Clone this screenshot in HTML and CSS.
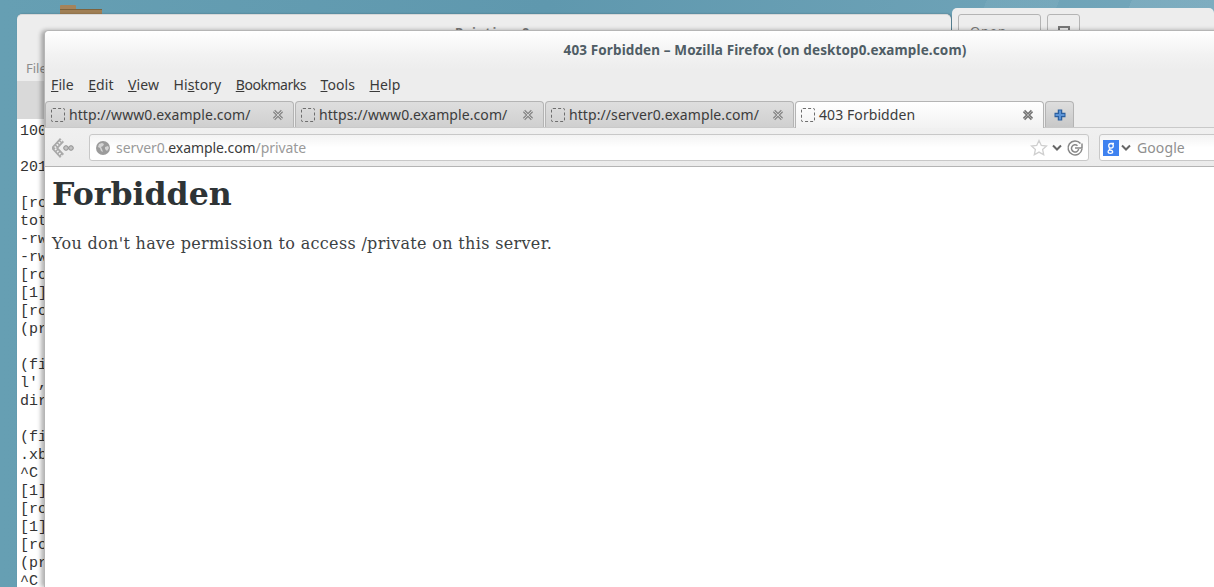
FILE: index.html
```html
<!DOCTYPE html>
<html lang="en">
<head>
<meta charset="utf-8">
<title>403 Forbidden</title>
<link rel="stylesheet" href="styles.css">
</head>
<body>
<main class="desktop">
  <div class="folder"><div class="folder-tab"></div><div class="folder-body"></div></div>

  <section class="window term">
    <div class="term-title">Pristine 0</div>
    <div class="term-menu">File</div>
    <div class="term-tabs"></div>
<pre class="term-text">100

201

[ro
tot
-rw
-rw
[ro
[1]
[ro
(pr

(fi
l',
dir

(fi
.xb
^C
[1]
[ro
[1]
[ro
(pr
^C</pre>
  </section>

  <section class="window editor">
    <div class="ed-btn ed-open">Open <span class="ed-caret"></span></div>
    <div class="ed-btn ed-save"><span class="ed-glyph"></span></div>
  </section>

  <section class="window firefox">
    <header class="ff-title">403 Forbidden – Mozilla Firefox (on desktop0.example.com)</header>
    <nav class="ff-menu">
      <span><u>F</u>ile</span><span><u>E</u>dit</span><span><u>V</u>iew</span><span>Hi<u>s</u>tory</span><span class="menu-tight"><u>B</u>ookmarks</span><span><u>T</u>ools</span><span><u>H</u>elp</span>
    </nav>
    <div class="ff-tabs">
      <div class="tab"><span class="fav"></span><span class="tab-label">http://www0.example.com/</span><svg class="tab-x" viewBox="0 0 12 12"><path class="x-o" d="M2 2l8 8M10 2l-8 8"/><path class="x-i" d="M2 2l8 8M10 2l-8 8"/></svg></div>
      <div class="tab"><span class="fav"></span><span class="tab-label">https://www0.example.com/</span><svg class="tab-x" viewBox="0 0 12 12"><path class="x-o" d="M2 2l8 8M10 2l-8 8"/><path class="x-i" d="M2 2l8 8M10 2l-8 8"/></svg></div>
      <div class="tab"><span class="fav"></span><span class="tab-label">http://server0.example.com/</span><svg class="tab-x" viewBox="0 0 12 12"><path class="x-o" d="M2 2l8 8M10 2l-8 8"/><path class="x-i" d="M2 2l8 8M10 2l-8 8"/></svg></div>
      <div class="tab tab-active"><span class="fav"></span><span class="tab-label">403 Forbidden</span><svg class="tab-x" viewBox="0 0 12 12"><path class="x-o" d="M2 2l8 8M10 2l-8 8"/><path class="x-i" d="M2 2l8 8M10 2l-8 8"/></svg></div>
      <div class="tab-new"><svg viewBox="0 0 14 14" width="14" height="14"><path class="plus-o" d="M7 1.500v11M1.500 7h11"/><path class="plus-i" d="M7 2.500v9M2.500 7h9"/></svg></div>
    </div>
    <div class="ff-nav">
      <svg class="back" viewBox="0 0 22 20" width="22" height="20">
        <path class="back-o" d="M10 2L2.500 10 10 18"/><path class="back-i" d="M10 2L2.500 10 10 18"/>
        <circle cx="14" cy="10" r="2.300"/><circle cx="19" cy="10" r="2.300"/>
      </svg>
      <div class="urlbar">
        <svg class="globe" viewBox="0 0 14 14" width="14" height="14"><circle cx="7" cy="7" r="7" fill="#9b9b9b"/><path d="M3 3l3-1 2 1-1 2-2 1 1 2 1 3-2-1-1-3-2-1zM9 6l3-1 1 2-2 3-2-2z" fill="#d4d4d4"/></svg>
        <span class="url"><span class="dim">server0.</span>example.com<span class="dim">/private</span></span>
        <span class="url-icons">
          <svg viewBox="0 0 18 18" width="18" height="18"><path class="star" d="M9 1.500l2.300 5 5.200.5-3.900 3.500 1.100 5.300L9 13.100l-4.700 2.700 1.100-5.300L1.500 7l5.200-.5z"/></svg>
          <svg viewBox="0 0 10 8" width="10" height="8"><path class="chev" d="M1 1.500l4 4 4-4"/></svg>
          <svg viewBox="0 0 18 18" width="18" height="18"><path class="reload" d="M14.500 4.500A7 7 0 1 0 16 10M11.500 6.800A3.600 3.600 0 1 0 12.600 10M9 9h7V4.500"/></svg>
        </span>
      </div>
      <div class="search">
        <svg class="gbox" viewBox="0 0 16 16" width="16" height="16"><rect width="16" height="16" fill="#3f82f0"/><path d="M11 3.500H8a2.300 2.300 0 1 0 0 4.600 2.300 2.300 0 0 0 0-4.600M6.800 8.200c-1.200.8-.6 1.500.6 1.800 1.500.4 2.300.8 2.300 1.700 0 1-1 1.600-2.300 1.600s-2.300-.6-2.300-1.600c0-.8.700-1.300 1.500-1.500" fill="none" stroke="#fff" stroke-width="1.300"/></svg>
        <svg viewBox="0 0 10 8" width="10" height="8"><path class="chev" d="M1 1.500l4 4 4-4"/></svg>
        <span class="search-label">Google</span>
      </div>
    </div>
    <article class="ff-page">
      <h1>Forbidden</h1>
      <p>You don't have permission to access /private on this server.</p>
    </article>
  </section>
</main>
</body>
</html>
```
FILE: styles.css
```css
* { box-sizing: border-box; }
html, body { margin: 0; height: 100%; overflow: hidden; }
body { font-family: "Noto Sans", sans-serif; }

.desktop {
  position: relative;
  width: 1214px;
  height: 587px;
  overflow: hidden;
  background:
    linear-gradient(112deg, transparent 78%, rgba(255,255,255,.07) 78%, rgba(255,255,255,.07) 84%, transparent 84%),
    linear-gradient(112deg, transparent 68%, rgba(255,255,255,.05) 68%, rgba(255,255,255,.05) 73%, transparent 73%),
    linear-gradient(90deg, #669fb3 0, #5f98ae 45%, #74a7bb 100%);
}

.folder { position: absolute; left: 60px; top: 5px; width: 42px; height: 10px; }
.folder-tab { width: 16px; height: 4px; background: #a5835a; border-radius: 1px 1px 0 0; }
.folder-body { height: 6px; background: #a07f55; border-top: 1px solid #7d623c; }

.window { position: absolute; border-radius: 5px 5px 0 0; overflow: hidden; }

.term {
  left: 17px; top: 14px; width: 934px; height: 573px;
  background: #ededed;
  border-top: 1px solid #d8d8d8;
  box-shadow: 1px 0 2px rgba(0,0,0,.3);
  display: flex;
  flex-direction: column;
}
.term-title { flex: none; height: 30px; padding: 8px 0 0 18px; text-align: center; font-size: 13px; font-weight: 700; letter-spacing: 1.500px; color: #777; }
.term-menu { flex: none; height: 36px; padding: 14px 0 0 9px; font-size: 13px; line-height: 18px; color: #8c8c8c; }
.term-tabs { flex: none; height: 38px; background: #d9d9d9; }
.term-text {
  flex: 1;
  min-height: 0;
  overflow: hidden;
  margin: 0;
  padding: 4px 0 0 3px;
  background: #fff;
  font: 15px/18px "Liberation Mono", monospace;
  color: #333;
}

.editor {
  left: 952px; top: 8px; width: 262px; height: 30px;
  background: #ededed;
  padding: 6px 0 0 6px;
  display: flex;
  gap: 6px;
  align-items: flex-start;
}
.ed-btn {
  height: 30px;
  border: 1px solid #b4b4b4;
  border-radius: 3px;
  background: #ededed;
  text-align: center;
  font-size: 13px;
  color: #777;
  padding-top: 7px;
  letter-spacing: .8px;
}
.ed-open { width: 83px; }
.ed-save { width: 33px; padding-top: 5px; }
.ed-caret { display: inline-block; width: 10px; height: 2px; margin-left: 8px; background: #888; vertical-align: middle; }
.ed-glyph { display: inline-block; width: 12px; height: 14px; border: 2px solid #777; margin-top: 6px; }

.firefox {
  left: 44px; top: 30px; width: 1441px; height: 557px;
  border-top: 1px solid #b5b5b5;
  border-left: 1px solid #b5b5b5;
  box-shadow: -3px 0 4px rgba(0,0,0,.3);
  display: flex;
  flex-direction: column;
  background: #ededed;
}
.ff-title {
  height: 39px;
  padding-top: 10px;
  background: linear-gradient(#fff 0, #f2f2f2 60%, #ededed 100%);
  text-align: center;
  font-size: 13.500px;
  line-height: 18px;
  font-weight: 700;
  letter-spacing: .12px;
  color: #4f5d65;
}
.ff-menu {
  height: 31px;
  display: flex;
  gap: 14.400px;
  padding: 4px 0 0 6px;
  font-size: 14px;
  line-height: 22px;
  color: #3a3a3a;
  letter-spacing: .1px;
}
.menu-tight { letter-spacing: -.45px; }
.ff-tabs { height: 26px; display: flex; gap: 1px; }
.tab {
  width: 249px;
  height: 27px;
  display: flex;
  align-items: center;
  padding: 0 9px 0 5px;
  border: 1px solid #b4b4b4;
  border-bottom: 0;
  border-radius: 4px 4px 0 0;
  background: linear-gradient(#dedede, #cfcfcf);
  font-size: 14px;
  color: #3c3c3c;
  letter-spacing: .08px;
}
.tab-active { background: linear-gradient(#fff, #f2f2f2); position: relative; z-index: 1; }
.fav { width: 14px; height: 14px; border: 1px dashed #6d6d6d; border-radius: 2px; margin-right: 4px; flex: none; }
.tab-label { flex: 1; white-space: nowrap; line-height: 18px; }
.tab-x { width: 12px; height: 12px; flex: none; }
.x-o { fill: none; stroke: #8c8c8c; stroke-width: 3.200; }
.x-i { fill: none; stroke: #cfcfcf; stroke-width: 1; }
.tab-active .x-o { stroke: #777; }
.tab-active .x-i { stroke: #aaa; }
.tab-new {
  width: 29px;
  height: 26px;
  display: flex;
  align-items: center;
  justify-content: center;
  border: 1px solid #b4b4b4;
  border-bottom: 0;
  border-radius: 4px 4px 0 0;
  background: linear-gradient(#dedede, #c8c8c8);
}
.plus-o { fill: none; stroke: #2b5f9e; stroke-width: 4.500; }
.plus-i { fill: none; stroke: #5b93d6; stroke-width: 2; }

.ff-nav {
  height: 40px;
  display: flex;
  align-items: center;
  padding: 1px 0 0 7px;
  background: linear-gradient(#f0f0f0, #ebebeb);
  border-top: 1px solid #c9c9c9;
  border-bottom: 1px solid #b4b4b4;
}
.back { flex: none; margin-right: 15px; }
.back-o { fill: none; stroke: #a9a9a9; stroke-width: 5.500; }
.back-i { fill: none; stroke: #efefef; stroke-width: 2; stroke-dasharray: 1.500 1.500; }
.back circle { fill: #c3c3c3; stroke: #8f8f8f; stroke-width: 1; }
.urlbar, .search {
  height: 27px;
  display: flex;
  align-items: center;
  background: linear-gradient(#f3f3f3, #fff 50%);
  border: 1px solid #c8c8c8;
  border-radius: 3px;
  font-size: 14px;
}
.urlbar { width: 1000px; padding: 0 4px 0 6px; margin-right: 10px; flex: none; letter-spacing: -.08px; }
.globe { flex: none; margin-right: 6px; }
.url { flex: 1; color: #3c3c3c; }
.dim { color: #9a9a9a; }
.url-icons { display: flex; align-items: center; gap: 4px; }
.star { fill: #fff; stroke: #cfcfcf; stroke-width: 1.300; }
.chev { fill: none; stroke: #666; stroke-width: 2; }
.reload { fill: none; stroke: #888; stroke-width: 1.500; }
.search { flex: 1; padding-left: 3px; gap: 2px; }
.gbox { flex: none; }
.search-label { margin-left: 4px; color: #8f8f8f; letter-spacing: .1px; }

.ff-page { flex: 1; background: #fff; padding: 7px 7px 0; font-family: "DejaVu Serif", serif; }
.ff-page h1 { margin: 0; font-size: 31.600px; line-height: 39px; font-weight: 700; color: #2e3436; }
.ff-page p { margin: 21px 0 0; font-size: 16px; line-height: 19px; letter-spacing: .33px; color: #3c4143; }
```
